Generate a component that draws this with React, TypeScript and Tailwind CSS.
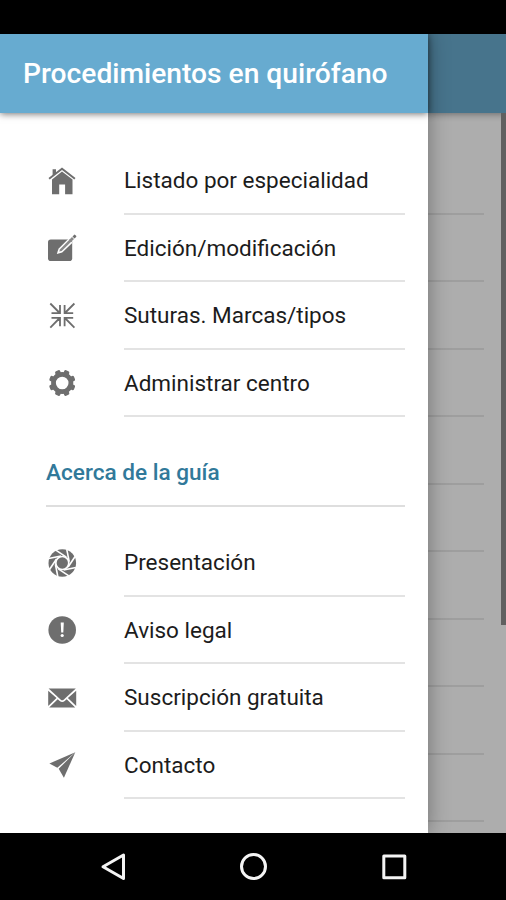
import type { ReactNode } from 'react';

const HomeIcon = () => (
  <svg viewBox="0 0 28 28" className="size-7 shrink-0" fill="#6e6e6e">
    <path d="M4.600 2.300H8v3.600L4.600 8.900z" />
    <path d="M14 .4.500 10.900l1.200 1.500L14 3.100l12.300 9.300 1.200-1.500z" />
    <path d="M14 4.600 4 12.400v14.800h7.200v-9.600h5.900v9.600h7.400V12.500z" />
  </svg>
);

const EditIcon = () => (
  <svg viewBox="0 0 28 28" className="size-7 shrink-0 overflow-visible">
    <rect y="5.500" width="24.200" height="21.500" rx="2.800" fill="#6e6e6e" />
    <path d="M8.800 19.900 10.500 14.700 20.500 4.800 24.500 8.800 14.200 18.500z" fill="#fff" />
    <path d="M11.200 17.600 12.100 15.200 24 3.100 26 5 13.700 16.900z" fill="#8a8a8a" />
    <path d="m24.500 2.500 1.500-1.600q.6-.6 1.200 0l.9.900q.6.600 0 1.200L26.500 4.500z" fill="#6e6e6e" />
  </svg>
);

const ContractIcon = () => (
  <svg viewBox="0 0 28 28" className="size-7 shrink-0" fill="none" stroke="#6e6e6e" strokeWidth="1.800">
    <path d="M2.300 1.500 11.700 11M3.500 11.200h8.500V2.900M26.400 1.500 16.900 11M16.600 2.900v8.300h8.600M2.300 25.600l9.400-9.600M3.500 15.800h8.500v8.500M26.400 25.600l-9.500-9.600M16.600 24.300v-8.500h8.600" />
  </svg>
);

const GearIcon = () => (
  <svg viewBox="0 0 28 28" className="size-7 shrink-0" fill="#6e6e6e">
    <g transform="translate(14.200 14)">
      <circle r="8.700" fill="none" stroke="#6e6e6e" strokeWidth="4.800" />
      {[22.5, 67.5, 112.5, 157.5, 202.5, 247.5, 292.5, 337.5].map((a) => (
        <rect key={a} x="-2.700" y="-13.300" width="5.400" height="5" rx="1.500" transform={`rotate(${a})`} />
      ))}
    </g>
  </svg>
);

const ApertureIcon = () => (
  <svg viewBox="0 0 28 28" className="size-7 shrink-0 overflow-visible">
    <g transform="translate(14.300 14)">
      <circle r="13.800" fill="#6e6e6e" />
      <circle r="6.500" fill="none" stroke="#fff" strokeWidth="1.700" />
      {[0, 45, 90, 135, 180, 225, 270, 315].map((a) => (
        <path key={a} d="M-6.500-12.800 4-5.800" transform={`rotate(${a})`} fill="none" stroke="#fff" strokeWidth="1.600" />
      ))}
    </g>
  </svg>
);

const AlertIcon = () => (
  <svg viewBox="0 0 28 28" className="size-7 shrink-0 overflow-visible">
    <circle cx="14.200" cy="14" r="13.800" fill="#6e6e6e" />
    <path d="M12.700 6.400h3.100l-.5 10.200h-2.100z" fill="#fff" />
    <circle cx="14.200" cy="19.500" r="1.600" fill="#fff" />
  </svg>
);

const MailIcon = () => (
  <svg viewBox="0 0 28 28" className="size-7 shrink-0 overflow-visible" fill="#6e6e6e">
    <path d="M.6 4.600h27.200L15.600 15.700q-1.400 1.100-2.800 0z" />
    <path d="M.2 6.700 8.500 14.100.2 22zM28.200 6.700l-8.300 7.400 8.300 7.900z" />
    <path d="m9.700 15.300 2 1.700q2.500 1.900 5 0l2-1.700 8.500 8.300H1.200z" />
  </svg>
);

const PlaneIcon = () => (
  <svg viewBox="0 0 28 28" className="size-7 shrink-0" fill="#6e6e6e">
    <path d="M27.300 1.200 1.400 12.600l7.900 4.200z" />
    <path d="M27.300 1.200 10.700 17.800l5.200 9z" />
  </svg>
);

type Item = { label: string; icon: ReactNode };

const procedures: Item[] = [
  { label: 'Listado por especialidad', icon: <HomeIcon /> },
  { label: 'Edición/modificación', icon: <EditIcon /> },
  { label: 'Suturas. Marcas/tipos', icon: <ContractIcon /> },
  { label: 'Administrar centro', icon: <GearIcon /> },
];

const about: Item[] = [
  { label: 'Presentación', icon: <ApertureIcon /> },
  { label: 'Aviso legal', icon: <AlertIcon /> },
  { label: 'Suscripción gratuita', icon: <MailIcon /> },
  { label: 'Contacto', icon: <PlaneIcon /> },
];

function MenuList({ items }: { items: Item[] }) {
  return (
    <ul>
      {items.map(({ label, icon }) => (
        <li key={label} className="flex h-[67.5px] items-center gap-12 pr-[23px] pl-12">
          {icon}
          <span className="flex h-full flex-1 items-center border-b-2 border-[#e3e3e3] pt-[3px] text-[22.5px] whitespace-nowrap text-[#1c1c1c]">
            {label}
          </span>
        </li>
      ))}
    </ul>
  );
}

export default function App() {
  return (
    <div className="flex h-[900px] w-[506px] flex-col overflow-hidden bg-black pt-[34px] font-[Roboto,sans-serif]">
      <main className="flex h-[799px] overflow-hidden">
        <aside className="z-10 flex w-[428px] shrink-0 flex-col bg-white shadow-[0_0_20px_rgba(0,0,0,0.35)]">
          <header className="flex h-[79px] shrink-0 items-center bg-[#67abd0] pt-0.5 pl-[23px] shadow-[0_1px_7px_rgba(0,0,0,0.55)]">
            <h1 className="text-[28.2px] font-medium whitespace-nowrap text-white">Procedimientos en quirófano</h1>
          </header>
          <nav className="pt-[34px]">
            <MenuList items={procedures} />
            <h2 className="mt-[22px] mr-[23px] ml-[46px] flex h-[67.5px] items-center border-b-2 border-[#dedede] pt-0.5 text-[22.6px] font-medium text-[#31799a]">
              Acerca de la guía
            </h2>
            <div className="pt-[22.500px]">
              <MenuList items={about} />
            </div>
          </nav>
        </aside>
        <section className="flex flex-1 flex-col bg-[#adadad]">
          <div className="h-[79px] shrink-0 bg-[#47748c] shadow-[0_1px_7px_rgba(0,0,0,0.4)]" />
          <div className="flex flex-1 justify-between overflow-hidden">
            <div className="w-14 pt-[34px]">
              {Array.from({ length: 10 }, (_, i) => (
                <div key={i} className="h-[67.5px] border-b-2 border-[#9e9e9e]" />
              ))}
            </div>
            <div className="h-[512px] w-[5px] bg-[#606060]" />
          </div>
        </section>
      </main>
      <footer className="flex h-[67px] items-center bg-black">
        <svg viewBox="0 0 506 67" className="h-[67px] w-[506px]" fill="none" stroke="#f4f4f4" strokeWidth="3" strokeLinejoin="round">
          <path d="M103 33.700 123.500 22v23.500z" />
          <circle cx="253.500" cy="33.500" r="12" />
          <path d="M383.800 23h21v21.700h-21z" />
        </svg>
      </footer>
    </div>
  );
}
